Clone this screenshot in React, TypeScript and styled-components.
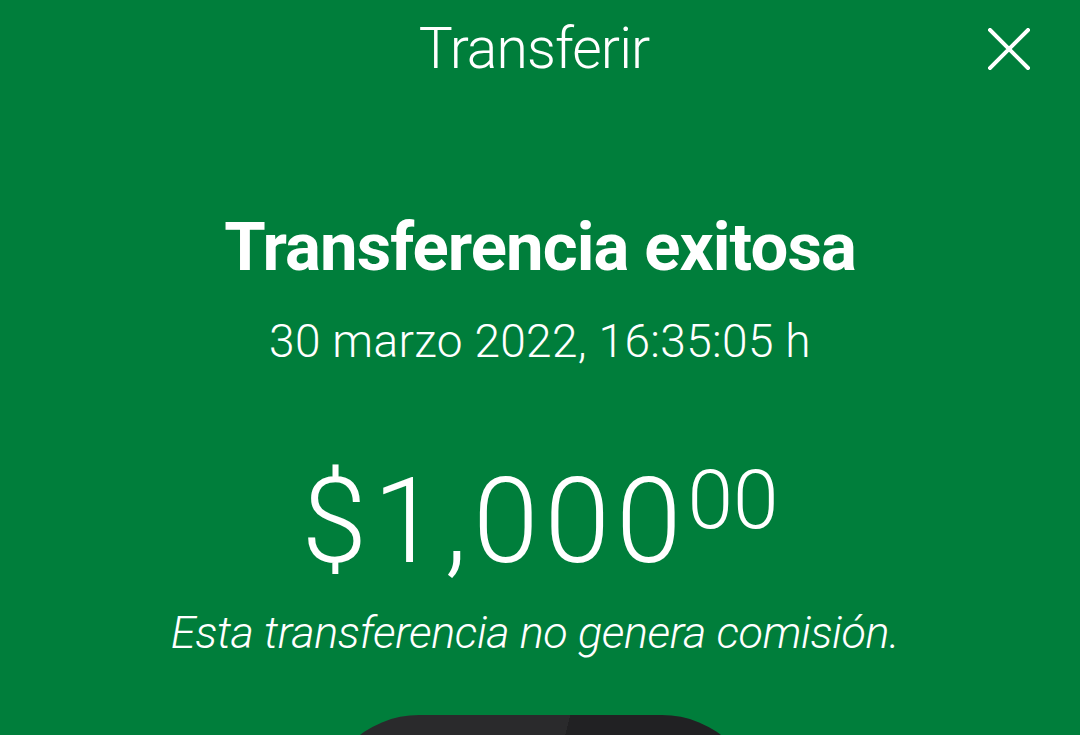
import React from 'react';
import styled, { createGlobalStyle } from 'styled-components';

const GlobalStyle = createGlobalStyle`
  html, body {
    margin: 0;
    padding: 0;
  }
  body {
    font-family: Roboto, "Liberation Sans", Arial, sans-serif;
    background: #007e3b;
  }
`;

const Screen = styled.div`
  width: 1080px;
  height: 735px;
  overflow: hidden;
  background: #007e3b;
  color: #ffffff;
  display: flex;
  flex-direction: column;
`;

const Header = styled.header`
  display: grid;
  grid-template-columns: 1fr auto 1fr;
  align-items: start;
  padding: 20px 50px 0 50px;
`;

const Title = styled.h1`
  grid-column: 2;
  margin: 0 12px 0 0;
  font-size: 57px;
  line-height: 1;
  font-weight: 300;
  letter-spacing: -0.9px;
`;

const CloseButton = styled.button`
  justify-self: end;
  margin-top: 8px;
  width: 42px;
  height: 42px;
  padding: 0;
  border: 0;
  background: transparent;
  cursor: pointer;
  display: flex;
`;

const Content = styled.main`
  display: flex;
  flex-direction: column;
  align-items: center;
  text-align: center;
`;

const Heading = styled.h2`
  margin: 137px 0 0;
  font-size: 67px;
  line-height: 1;
  font-weight: 700;
  letter-spacing: -0.9px;
`;

const DateLine = styled.p`
  margin: 37px 0 0;
  font-size: 46px;
  line-height: 1;
  font-weight: 300;
  letter-spacing: 0.35px;
`;

const Amount = styled.div`
  margin-top: 99px;
  display: flex;
  align-items: flex-start;
  font-weight: 300;
  line-height: 1;
`;

const AmountMain = styled.span`
  font-size: 118px;
  letter-spacing: 6px;
`;

const Cents = styled.span`
  font-size: 82px;
  margin-top: -4px;
  letter-spacing: 0;
`;

const Note = styled.p`
  margin: 29px 0 0;
  font-size: 45px;
  line-height: 1;
  font-weight: 300;
  font-style: italic;
  letter-spacing: -0.4px;
  transform: translateX(-5px);
`;

const Card = styled.div`
  margin: 60px auto 0;
  width: 437px;
  height: 200px;
  flex-shrink: 0;
  border-radius: 97px 97px 0 0;
  background: linear-gradient(104deg, #2a2a2c 0 51%, #212123 51% 100%);
`;

export default function App() {
  return (
    <>
      <GlobalStyle />
      <Screen>
        <Header>
          <Title>Transferir</Title>
          <CloseButton aria-label="Cerrar">
            <svg width="42" height="42" viewBox="0 0 42 42">
              <path d="M2 2 L40 40 M40 2 L2 40" stroke="#ffffff" strokeWidth="4" strokeLinecap="square" fill="none" />
            </svg>
          </CloseButton>
        </Header>
        <Content>
          <Heading>Transferencia exitosa</Heading>
          <DateLine>30 marzo 2022, 16:35:05 h</DateLine>
          <Amount>
            <AmountMain>$1,000</AmountMain>
            <Cents>00</Cents>
          </Amount>
          <Note>Esta transferencia no genera comisión.</Note>
        </Content>
        <Card />
      </Screen>
    </>
  );
}
